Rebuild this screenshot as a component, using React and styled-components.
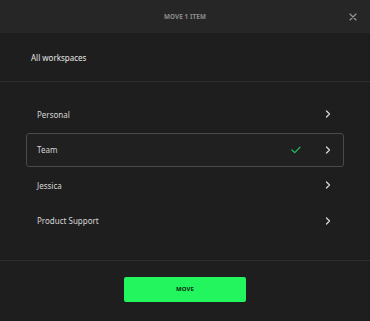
import React, { useState } from 'react';
import styled, { createGlobalStyle } from 'styled-components';

const Global = createGlobalStyle`
    html, body {
        margin: 0;
        padding: 0;
        background: #1e1e1e;
    }
    * {
        box-sizing: border-box;
    }
`;

const Modal = styled.div`
    width: 370px;
    height: 321px;
    display: flex;
    flex-direction: column;
    background: #1e1e1e;
    font-family: 'Noto Sans', 'Open Sans', sans-serif;
    color: #dcdcdc;
    overflow: hidden;
    box-shadow: inset -1px 0 0 #191919;
`;

const Header = styled.div`
    position: relative;
    height: 33px;
    flex-shrink: 0;
    display: flex;
    align-items: center;
    justify-content: center;
    background: #262626;
`;

const Title = styled.h1`
    margin: 0;
    font-size: 6.3px;
    font-weight: 700;
    letter-spacing: 0.1px;
    color: #8c8c8c;
`;

const Close = styled.button`
    position: absolute;
    right: 13px;
    top: 12px;
    width: 9px;
    height: 9px;
    padding: 0;
    border: 0;
    background: none;
    display: flex;
    align-items: center;
    justify-content: center;
    cursor: pointer;
`;

const Crumb = styled.div`
    height: 49px;
    display: flex;
    align-items: center;
    padding: 0 31px;
    font-size: 8px;
    color: #e6e6e6;
    border-bottom: 1px solid #2c2c2c;
`;

const List = styled.ul`
    list-style: none;
    margin: 0;
    padding: 15px 26px 22px;
    display: flex;
    flex-direction: column;
    gap: 1.5px;
    border-bottom: 1px solid #2c2c2c;
`;

const Row = styled.li`
    height: 34px;
    display: flex;
    align-items: center;
    padding: 0 12px 0 10px;
    border: 1px solid ${p => (p.$selected ? '#4a4a4a' : 'transparent')};
    border-radius: 3px;
    background: ${p => (p.$selected ? '#202020' : 'transparent')};
    font-size: 8px;
    color: #d6d6d6;
    cursor: pointer;
`;

const Name = styled.span`
    flex: 1;
`;

const Check = styled.span`
    display: flex;
    margin-right: 24px;
`;

const Footer = styled.div`
    flex: 1;
    display: flex;
    justify-content: center;
    padding-top: 16px;
`;

const MoveButton = styled.button`
    width: 122px;
    height: 25px;
    border: 0;
    border-radius: 2px;
    background: #23f55e;
    color: #0d2a14;
    font-family: 'Noto Sans', 'Open Sans', sans-serif;
    font-size: 6px;
    font-weight: 700;
    letter-spacing: 0.1px;
    cursor: pointer;
`;

const Chevron = () => (
    <svg width="6" height="8" viewBox="0 0 6 8">
        <path d="M1.5 1 L4.5 4 L1.5 7" fill="none" stroke="#d8d8d8" strokeWidth="1.3" strokeLinecap="round" strokeLinejoin="round" />
    </svg>
);

const workspaces = ['Personal', 'Team', 'Jessica', 'Product Support'];

function App() {
    const [selected, setSelected] = useState('Team');

    return (
        <>
            <Global />
            <Modal>
                <Header>
                    <Title>MOVE 1 ITEM</Title>
                    <Close aria-label="close">
                        <svg width="8" height="8" viewBox="0 0 8 8">
                            <path d="M1 1 L7 7 M7 1 L1 7" stroke="#9a9a9a" strokeWidth="1.1" strokeLinecap="round" />
                        </svg>
                    </Close>
                </Header>
                <Crumb>All workspaces</Crumb>
                <List>
                    {workspaces.map(name => (
                        <Row key={name} $selected={selected === name} onClick={() => setSelected(name)}>
                            <Name>{name}</Name>
                            {selected === name && (
                                <Check>
                                    <svg width="10" height="8" viewBox="0 0 10 8">
                                        <path d="M1 4 L3.8 6.6 L9 1.2" fill="none" stroke="#22c55e" strokeWidth="1.2" strokeLinecap="round" strokeLinejoin="round" />
                                    </svg>
                                </Check>
                            )}
                            <Chevron />
                        </Row>
                    ))}
                </List>
                <Footer>
                    <MoveButton>MOVE</MoveButton>
                </Footer>
            </Modal>
        </>
    );
}

export default App;
